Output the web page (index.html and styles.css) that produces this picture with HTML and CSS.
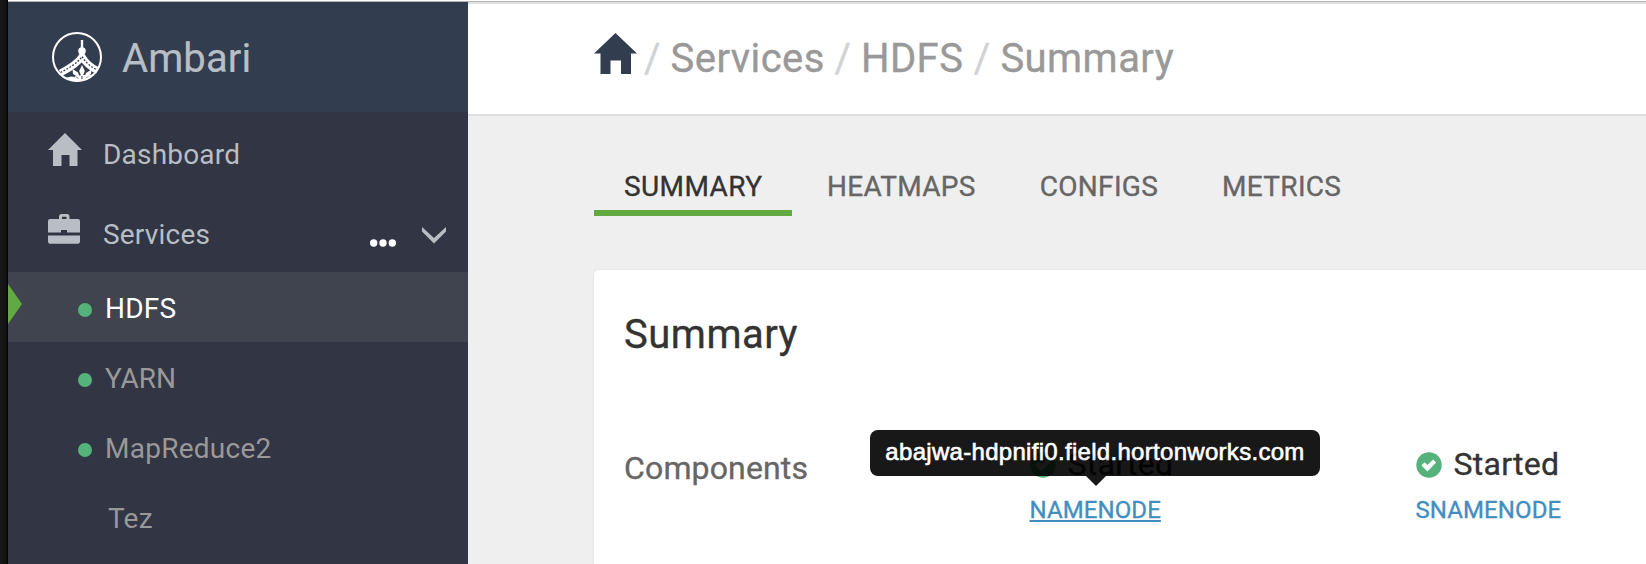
FILE: index.html
```html
<!DOCTYPE html>
<html lang="en">
<head>
<meta charset="utf-8">
<title>Ambari - HDFS</title>
<link rel="stylesheet" href="styles.css">
</head>
<body>
<div class="desktop-edge"></div>
<div class="window">
  <nav class="sidebar">
    <div class="brand">
      <svg class="brand-logo" width="52" height="52" viewBox="0 0 52 52">
        <path d="M9.500 42C18 37.500 27 32.500 31 25.500C35 32.500 40 36.500 46.500 39.500" fill="none" stroke="#fff" stroke-width="7"/>
        <path d="M9.500 41.500C18 37 27 32 31 25.500C35 32 40 36 46.500 39" fill="none" stroke="#323d50" stroke-width="1.300" stroke-dasharray="1.800 1.600"/>
        <path d="M14 47Q31 43 43 44Q36 50.500 26 50.500Q20 50.500 14 47z" fill="#fff"/>
        <path d="M31 47l-2.800-7L31 34l2.800 6zM29 47l-7-4-.5-5 5.500 3.500zM33 47l7-4 .5-4.500-5.500 3.500z" fill="#fff"/>
        <path d="M24 46l-5-2M38 46l4-2M31 48v-3M27 47.500l-2-2M35 47.500l2-2" stroke="#323d50" stroke-width="1"/>
        <path d="M31 9v10" stroke="#fff" stroke-width="2.400"/>
        <circle cx="31" cy="20" r="3.800" fill="#fff"/>
        <circle cx="26" cy="26" r="24" fill="none" stroke="#fff" stroke-width="2"/>
      </svg>
      <span class="brand-name">Ambari</span>
    </div>
    <a class="nav-item">
      <svg class="nav-icon" width="34" height="33" viewBox="0 0 34 33"><path d="M17 0l17 17h-4.500v16H21.500V22h-8v11H5V17H0z"/></svg>
      <span class="nav-label">Dashboard</span>
    </a>
    <a class="nav-item">
      <svg class="nav-icon briefcase" width="32" height="30" viewBox="0 0 32 30"><path d="M11 5V2.500Q11 0 13.500 0h5.500Q21.500 0 21.500 2.500V5H30q2 0 2 2v11.500H19V16h-6v2.500H0V7q0-2 2-2zM14 5h4.500V2.800H14zM0 21.500h32V27q0 2.800-2 2.800H2Q0 29.800 0 27z" fill-rule="evenodd"/></svg>
      <span class="nav-label">Services</span>
      <svg class="dots" width="26" height="8" viewBox="0 0 26 8"><circle cx="3.700" cy="4" r="3.700"/><circle cx="13" cy="4" r="3.700"/><circle cx="22.300" cy="4" r="3.700"/></svg>
      <svg class="chevron" width="24" height="17" viewBox="0 0 24 17"><path d="M0 0l12 11L24 0v4.500L12 16.500 0 4.500z"/></svg>
    </a>
    <a class="sub-item active"><i class="status"></i><span>HDFS</span></a>
    <a class="sub-item"><i class="status"></i><span class="yarn">YARN</span></a>
    <a class="sub-item"><i class="status"></i><span>MapReduce2</span></a>
    <a class="sub-item"><i class="status none"></i><span>Tez</span></a>
  </nav>
  <main class="main">
    <header class="breadcrumbs">
      <svg class="crumb-home" width="43" height="41" viewBox="0 0 43 41"><path d="M21.500 0L43 20.500h-6V41H27V27.500H16.500V41h-10V20.500H0z"/></svg>
      <span class="slash">/</span><span class="crumb">Services</span>
      <span class="slash">/</span><span class="crumb">HDFS</span>
      <span class="slash last">/</span><span class="crumb">Summary</span>
    </header>
    <div class="tabs">
      <a class="tab selected">SUMMARY</a>
      <a class="tab">HEATMAPS</a>
      <a class="tab">CONFIGS</a>
      <a class="tab">METRICS</a>
    </div>
    <section class="card">
      <h1 class="card-title">Summary</h1>
      <div class="components">
        <div class="row-label">Components</div>
        <div class="component">
          <div class="state"><svg width="26" height="26" viewBox="0 0 26 26"><circle cx="13" cy="13" r="12.700" fill="#56b27b"/><path d="M5.500 13.500l3-3.200 3 2.700 5.600-5.500 3 3-8.600 9z" fill="#fff"/></svg><span>Started</span></div>
          <a class="link hovered">NAMENODE</a>
          <div class="tooltip">abajwa-hdpnifi0.field.hortonworks.com</div>
        </div>
        <div class="component last">
          <div class="state"><svg width="26" height="26" viewBox="0 0 26 26"><circle cx="13" cy="13" r="12.700" fill="#56b27b"/><path d="M5.500 13.500l3-3.200 3 2.700 5.600-5.500 3 3-8.600 9z" fill="#fff"/></svg><span>Started</span></div>
          <a class="link">SNAMENODE</a>
        </div>
      </div>
    </section>
  </main>
</div>
</body>
</html>
```
FILE: styles.css
```css
* { box-sizing: border-box; }
body {
  margin: 0;
  height: 564px;
  display: flex;
  overflow: hidden;
  background: #fff;
  font-family: Roboto, "Liberation Sans", sans-serif;
}
.desktop-edge { flex: none; width: 8px; background: linear-gradient(90deg, #181818, #131313 70%, #000); }
.window { flex: 1; min-width: 0; display: flex; border-top: 1px solid #b2b4b6; margin-top: 1px; }

.sidebar { flex: none; width: 460px; height: 562px; background: #323544; overflow: hidden; }
.brand { display: flex; height: 110px; padding: 28px 0 0 43px; background: #323d50; }
.brand-logo { margin-top: 1px; }
.brand-name { margin: 1px 0 0 19px; font-size: 40px; line-height: 56px; color: #b8bec4; letter-spacing: .1px; -webkit-text-stroke: .2px; }
.nav-item { display: flex; height: 80px; padding-left: 40px; color: #b8bec4; fill: #b8bec4; }
.nav-icon { margin-top: 21px; flex: none; }
.nav-icon.briefcase { margin-top: 22px; margin-right: 2px; }
.nav-label { width: 260px; margin-left: 21px; font-size: 28px; line-height: 86px; letter-spacing: .2px; }
.dots { margin: 47px 0 0 7px; fill: #fff; }
.chevron { margin: 35px 0 0 26px; }
.sub-item { position: relative; display: flex; height: 70px; padding-left: 70px; font-size: 28px; line-height: 73px; color: #999; letter-spacing: .25px; }
.sub-item .yarn { letter-spacing: 0; }
.sub-item.active { background: #40444f; color: #fff; }
.sub-item.active::before {
  content: "";
  position: absolute;
  left: 0;
  top: 12px;
  width: 14px;
  height: 40px;
  background: #61aa41;
  clip-path: polygon(0 0, 100% 50%, 0 100%);
}
.status { width: 14px; height: 14px; margin: 31px 13px 0 0; border-radius: 50%; background: #56b27b; }
.status.none { background: none; margin-right: 16px; }

.main { flex: 1; min-width: 0; background: #efefef; overflow: hidden; -webkit-text-stroke: .35px; }
.breadcrumbs { display: flex; height: 114px; padding-left: 126px; border-top: 2px solid #e0e0e0; border-bottom: 2px solid #e0e0e0; background: #fff; font-size: 40px; line-height: 109px; color: #999; }
.crumb-home { margin-top: 29px; fill: #323d50; }
.slash { margin: 0 10px 0 7px; color: #d0d2d4; }
.slash.last { margin-left: 8px; }
.crumb { letter-spacing: .45px; margin-right: 2.5px; }

.tabs { display: flex; gap: 4px; height: 100px; margin: 0 0 54px 126px; padding-top: 36px; }
.tab { height: 64px; padding: 0 30px; font-size: 28px; line-height: 70px; color: #666; letter-spacing: .3px; }
.tab.selected { width: 198px; margin-right: 1px; color: #333; border-bottom: 6px solid #61aa41; letter-spacing: .4px; }

.card { height: 320px; margin-left: 126px; padding: 37px 0 0 30px; border-radius: 5px 0 0 0; background: #fff; box-shadow: 0 0 3px rgba(0, 0, 0, .08); }
.card-title { margin: 0; font-size: 40px; line-height: 56px; font-weight: 400; color: #333; letter-spacing: .5px; }
.components { display: flex; margin-top: 81px; }
.row-label { flex: none; width: 405.500px; font-size: 32px; line-height: 49px; color: #666; letter-spacing: .15px; }
.component { position: relative; flex: none; width: 386px; }
.component.last { width: 200px; }
.state { display: flex; height: 41px; font-size: 32px; line-height: 41px; color: #333; letter-spacing: .25px; }
.state svg { margin: 8px 12px 0 0; }
.link { display: inline-block; font-size: 24px; line-height: 50px; color: #428ec0; letter-spacing: .1px; }
.link.hovered { text-decoration: underline; text-decoration-thickness: 2px; text-underline-offset: 2px; }
.tooltip {
  position: absolute;
  left: -159.500px;
  top: -14px;
  width: 450px;
  height: 46px;
  border-radius: 8px;
  background: #000;
  opacity: .9;
  color: #fff;
  text-align: center;
  font: 24px/44px "Liberation Sans", Arial, sans-serif;
  letter-spacing: .3px;
  -webkit-text-stroke: .6px #fff;
}
.tooltip::after {
  content: "";
  position: absolute;
  left: 216px;
  top: 46px;
  border: solid transparent;
  border-width: 10px 10px 0;
  border-top-color: #000;
}
```
